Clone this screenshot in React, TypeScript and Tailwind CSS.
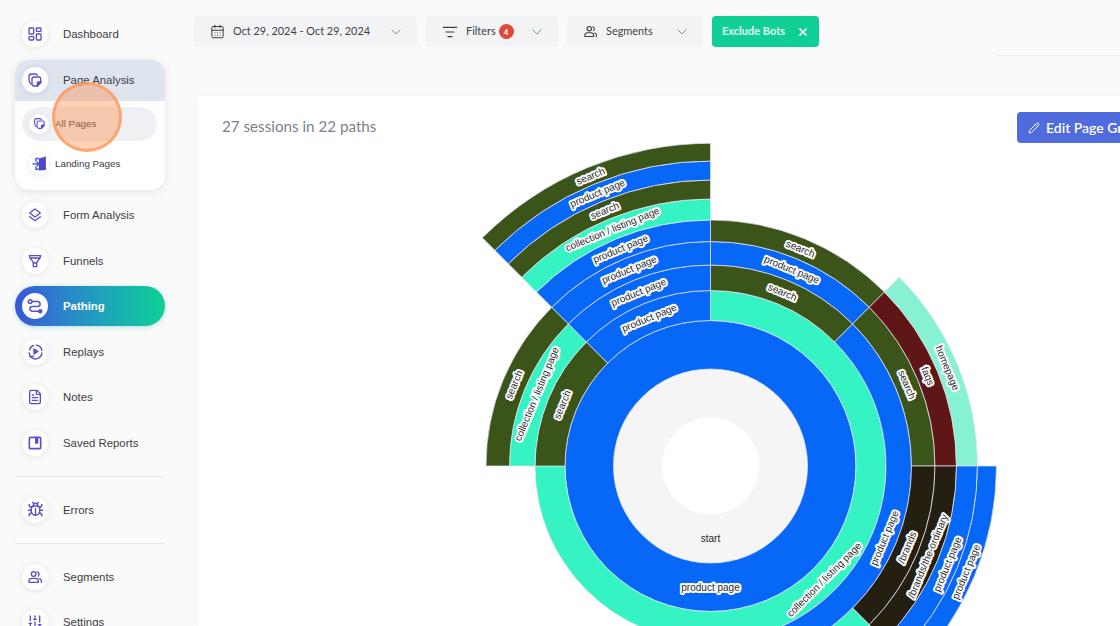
import { Bug, CalendarDays, ChevronDown, FileText, LayoutDashboard, ListFilter, Pencil, SlidersVertical, X } from "lucide-react";
import type { ReactNode } from "react";

const BLUE = "#0767f6";
const MINT = "#35f3c2";
const GREEN = "#3a5419";
const RED = "#5e1616";
const BLACK = "#251f12";
const PALE = "#86f1d3";

const R = [48.5, 97, 145.5, 175.5, 201, 224.5, 246, 267, 286, 305, 322.7];

type Seg = { ring: number; from: number; to: number; color: string; label?: string };

const segments: Seg[] = [
  { ring: 0, from: 0, to: 360, color: "#f5f5f6", label: "start" },
  { ring: 1, from: 0, to: 360, color: BLUE, label: "product page" },
  { ring: 2, from: 0, to: 270, color: MINT, label: "collection / listing page" },
  { ring: 2, from: 270, to: 315, color: GREEN, label: "search" },
  { ring: 2, from: 315, to: 360, color: BLUE, label: "product page" },
  { ring: 3, from: 0, to: 45, color: GREEN, label: "search" },
  { ring: 3, from: 45, to: 180, color: BLUE, label: "product page" },
  { ring: 3, from: 270, to: 315, color: MINT, label: "collection / listing page" },
  { ring: 3, from: 315, to: 360, color: BLUE, label: "product page" },
  { ring: 4, from: 0, to: 45, color: BLUE, label: "product page" },
  { ring: 4, from: 45, to: 90, color: GREEN, label: "search" },
  { ring: 4, from: 90, to: 135, color: BLACK, label: "/brands" },
  { ring: 4, from: 135, to: 180, color: MINT },
  { ring: 4, from: 270, to: 315, color: GREEN, label: "search" },
  { ring: 4, from: 315, to: 360, color: BLUE, label: "product page" },
  { ring: 5, from: 0, to: 45, color: GREEN, label: "search" },
  { ring: 5, from: 45, to: 90, color: RED, label: "faqs" },
  { ring: 5, from: 90, to: 135, color: BLACK, label: "/brands/the-ordinary" },
  { ring: 5, from: 315, to: 360, color: BLUE, label: "product page" },
  { ring: 6, from: 45, to: 90, color: PALE, label: "homepage" },
  { ring: 6, from: 90, to: 135, color: BLUE, label: "product page" },
  { ring: 6, from: 315, to: 360, color: MINT, label: "collection / listing page" },
  { ring: 7, from: 90, to: 135, color: BLUE, label: "product page" },
  { ring: 7, from: 315, to: 360, color: GREEN, label: "search" },
  { ring: 8, from: 315, to: 360, color: BLUE, label: "product page" },
  { ring: 9, from: 315, to: 360, color: GREEN, label: "search" },
];

function polar(r: number, deg: number) {
  const a = (deg * Math.PI) / 180;
  return [r * Math.sin(a), -r * Math.cos(a)];
}

function arcPath(r0: number, r1: number, from: number, to: number) {
  if (to - from >= 360) {
    return `M0 ${-r1}A${r1} ${r1} 0 1 1 0 ${r1}A${r1} ${r1} 0 1 1 0 ${-r1}ZM0 ${-r0}A${r0} ${r0} 0 1 0 0 ${r0}A${r0} ${r0} 0 1 0 0 ${-r0}Z`;
  }
  const large = to - from > 180 ? 1 : 0;
  const [x0, y0] = polar(r1, from);
  const [x1, y1] = polar(r1, to);
  const [x2, y2] = polar(r0, to);
  const [x3, y3] = polar(r0, from);
  return `M${x0} ${y0}A${r1} ${r1} 0 ${large} 1 ${x1} ${y1}L${x2} ${y2}A${r0} ${r0} 0 ${large} 0 ${x3} ${y3}Z`;
}

function Sunburst() {
  return (
    <svg width="660" height="660" viewBox="-330.5 -330 660 660" className="block shrink-0 ml-[158px] mt-[-8px]">
      {segments.map((s, i) => (
        <path
          key={i}
          d={arcPath(R[s.ring], R[s.ring + 1], s.from, s.to)}
          fill={s.color}
          stroke={s.ring === 0 ? "none" : "#e6e4f5"}
          strokeWidth="0.7"
        />
      ))}
      {segments.map((s, i) => {
        if (!s.label) return null;
        const mid = (s.from + s.to) / 2;
        const r = (R[s.ring] + R[s.ring + 1]) / 2;
        const [x, y] = polar(r, mid);
        const rot = mid > 90 && mid <= 270 ? mid - 180 : mid > 270 ? mid - 360 : mid;
        return (
          <text
            key={i}
            transform={`translate(${x} ${y}) rotate(${rot})`}
            textAnchor="middle"
            dominantBaseline="central"
            fontSize="10"
            fill="#2a2a2a"
            stroke={s.ring === 0 ? "none" : "#fff"}
            strokeWidth="4"
            strokeLinejoin="round"
            paintOrder="stroke"
            className="font-['Liberation_Sans',sans-serif]"
          >
            {s.label}
          </text>
        );
      })}
    </svg>
  );
}

const ic = { fill: "none", stroke: "currentColor", strokeWidth: 2, strokeLinecap: "round", strokeLinejoin: "round" } as const;

const PagesIcon = ({ size = 16 }: { size?: number }) => (
  <svg width={size} height={size} viewBox="0 0 24 24" {...ic}>
    <path d="M6 18C3.800 16 3 14 3 11V7c0-2.500 1.500-4 4-4h5c1.500 0 2.700.5 3.500 1.500" />
    <path d="M10.500 7.500H18a2.500 2.500 0 0 1 2.500 2.500v6l-5 5H11a3.500 3.500 0 0 1-3.500-3.500v-7a3 3 0 0 1 3-3z" />
    <path d="M21 15h-4a1.500 1.500 0 0 0-1.500 1.500V21z" fill="currentColor" />
  </svg>
);

const LayersIcon = () => (
  <svg width="16" height="16" viewBox="0 0 24 24" {...ic}>
    <path d="M12 3l8 6-8 6-8-6z" />
    <path d="M4 14.500l8 6 8-6" />
  </svg>
);

const FunnelIcon = () => (
  <svg width="16" height="16" viewBox="0 0 24 24" {...ic}>
    <path d="M3.500 4h17l-1 3.500H4.500z" />
    <path d="M5 8l4.500 6v6.500h5V14L19 8" />
    <path d="M9.500 15h5" />
  </svg>
);

const PathIcon = () => (
  <svg width="18" height="18" viewBox="0 0 24 24" {...ic}>
    <circle cx="5.500" cy="6" r="2.500" />
    <path d="M8 6h7.500a3 3 0 0 1 0 6.500h-7a3 3 0 0 0 0 6.500H16" />
    <circle cx="19" cy="19" r="2" fill="currentColor" />
  </svg>
);

const ReplayIcon = () => (
  <svg width="17" height="17" viewBox="0 0 24 24" {...ic}>
    <path d="M3.500 9.500A9 9 0 0 1 9 3.500" />
    <path d="M13 3a9 9 0 0 1 8 7.500" />
    <path d="M21 14a9 9 0 0 1-16 5" />
    <path d="M3 14l1.500 5.500 5-1" />
    <path d="M10 8.500l5.500 3.500-5.500 3.500z" fill="currentColor" />
  </svg>
);

const SavedIcon = () => (
  <svg width="16" height="16" viewBox="0 0 24 24" {...ic}>
    <rect x="3.500" y="3.500" width="17" height="17" rx="1.500" strokeWidth="2.400" />
    <path d="M12 4h5v9h-5z" fill="currentColor" stroke="none" />
  </svg>
);

const GroupIcon = ({ size = 16, width = 2 }: { size?: number; width?: number }) => (
  <svg width={size} height={size} viewBox="0 0 24 24" {...ic} strokeWidth={width}>
    <circle cx="10" cy="7.500" r="3.500" />
    <path d="M15.500 4.500a3.500 3.500 0 0 1 1.500 6" />
    <path d="M3 20v-2a4 4 0 0 1 4-4h6a4 4 0 0 1 4 4v2z" />
    <path d="M19 14.500a4 4 0 0 1 2.500 3.500v2" />
  </svg>
);

const LandingIcon = () => (
  <svg width="17" height="17" viewBox="0 0 24 24" fill="none">
    <path d="M11 5l10-3v19l-10 1z" fill="#4f46c8" />
    <path d="M11 5H7v4M7 16v4h4" stroke="#3b5bdb" strokeWidth="2" />
    <path d="M2 12.500h9M8 9.500l3 3-3 3" stroke="#3b5bdb" strokeWidth="2" />
  </svg>
);

function Circle({ children, small }: { children: ReactNode; small?: boolean }) {
  return (
    <span
      className={`flex items-center justify-center rounded-full bg-white text-[#5a4fc6] shadow-[0_1px_6px_rgba(40,40,80,0.1)] shrink-0 ${
        small ? "w-[20px] h-[20px]" : "w-[26px] h-[26px]"
      }`}
    >
      {children}
    </span>
  );
}

function NavRow({ icon, label }: { icon: ReactNode; label: string }) {
  return (
    <div className="flex items-center h-[40px] pl-[7px] gap-[15px] text-[11.4px] text-[#3a3d44] shrink-0">
      <Circle>{icon}</Circle>
      <span className="pt-[2px]">{label}</span>
    </div>
  );
}

function Divider() {
  return <div className="h-px bg-[#e5e8ea] my-[7.5px] shrink-0" />;
}

function Dropdown({ icon, label, badge, width }: { icon: ReactNode; label: string; badge?: boolean; width: string }) {
  return (
    <div className={`flex items-center h-[31px] rounded-[4px] bg-[#f2f3f5] pl-[16px] pr-[13px] text-[10.9px] text-[#3c3f46] ${width}`}>
      {icon}
      <span className="ml-[8px]">{label}</span>
      {badge && (
        <span className="ml-[3px] flex items-center justify-center w-[15px] h-[15px] rounded-full bg-[#e2483a] text-white text-[8px] font-bold">
          4
        </span>
      )}
      <ChevronDown size={16} strokeWidth={1.5} className="ml-auto text-[#8b9099]" />
    </div>
  );
}

export default function App() {
  return (
    <div className="flex w-[1120px] h-[626px] overflow-hidden bg-[#fafafa] font-['Liberation_Sans',sans-serif]">
      <aside className="relative w-[198px] shrink-0 pl-[15px] pr-[33px] pt-[14px] flex flex-col gap-[5.5px] overflow-hidden">
        <NavRow icon={<LayoutDashboard size={16} />} label="Dashboard" />

        <div className="rounded-[14px] bg-white shadow-[0_2px_8px_rgba(40,40,80,0.1)] overflow-hidden h-[130px] shrink-0">
          <div className="flex items-center h-[41px] bg-[#dfe5ef] pl-[7px] gap-[15px] text-[11.4px] text-[#3a3d44]">
            <Circle>
              <PagesIcon />
            </Circle>
            <span className="pt-[2px]">Page Analysis</span>
          </div>
          <div className="flex flex-col pl-[7px] pr-[8px] pt-[6px] gap-[6px]">
            <div className="flex items-center h-[34px] rounded-full bg-[#f0f1f4] pl-[7px] gap-[6px] text-[9.8px] text-[#3a3d44]">
              <Circle small>
                <PagesIcon size={13} />
              </Circle>
              <span className="pt-[2px]">All Pages</span>
            </div>
            <div className="flex items-center h-[34px] pl-[7px] gap-[6px] text-[9.8px] text-[#3a3d44]">
              <Circle small>
                <LandingIcon />
              </Circle>
              <span className="pt-[2px]">Landing Pages</span>
            </div>
          </div>
        </div>

        <NavRow icon={<LayersIcon />} label="Form Analysis" />
        <NavRow icon={<FunnelIcon />} label="Funnels" />

        <div className="flex items-center h-[40px] pl-[7px] gap-[15px] rounded-full bg-gradient-to-r from-[#3a55dd] to-[#10d094] text-[11.4px] font-bold text-white shadow-[0_1px_5px_rgba(20,160,150,0.3)] shrink-0">
          <Circle>
            <PathIcon />
          </Circle>
          <span className="pt-[2px]">Pathing</span>
        </div>

        <NavRow icon={<ReplayIcon />} label="Replays" />
        <NavRow icon={<FileText size={16} />} label="Notes" />
        <NavRow icon={<SavedIcon />} label="Saved Reports" />
        <Divider />
        <NavRow icon={<Bug size={17} />} label="Errors" />
        <Divider />
        <NavRow icon={<GroupIcon />} label="Segments" />
        <NavRow icon={<SlidersVertical size={16} />} label="Settings" />

        <div className="absolute left-[52px] top-[82px] w-[70px] h-[70px] rounded-full bg-[#ff8c46]/40 border-[3px] border-[#ff9a5c]/80" />
      </aside>

      <main className="flex-1 min-w-0 flex flex-col font-['Lato',sans-serif]">
        <div className="relative h-[96px] shrink-0 flex items-start pt-[16px] gap-[9px] ml-[-4px]">
          <Dropdown icon={<CalendarDays size={15} strokeWidth={1.6} />} label="Oct 29, 2024 - Oct 29, 2024" width="w-[223px]" />
          <Dropdown icon={<ListFilter size={16} strokeWidth={1.8} />} label="Filters" badge width="w-[132px]" />
          <Dropdown icon={<GroupIcon size={15} width={1.8} />} label="Segments" width="w-[136px]" />
          <div className="flex items-center justify-between h-[31px] w-[107px] rounded-[4px] bg-[#10cf96] pl-[10px] pr-[10px] text-[11px] font-bold text-white/85">
            <span>Exclude Bots</span>
            <X size={12} strokeWidth={3.5} className="text-white" />
          </div>
          <div className="absolute left-[801px] top-[55px] w-[125px] h-px bg-[#efefef]" />
        </div>

        <section className="flex-1 min-h-0 bg-white overflow-hidden pt-[16px] pl-[24px] shadow-[0_0_6px_rgba(0,0,0,0.03)]">
          <div className="flex items-start h-[32px]">
            <span className="w-[795px] shrink-0 text-[15.2px] text-[#7d828a] pt-[3px]">27 sessions in 22 paths</span>
            <button className="flex items-center gap-[6px] h-[31px] w-[160px] shrink-0 rounded-[4px] bg-[#4f6bdc] pl-[11px] text-[14px] font-semibold text-white whitespace-nowrap">
              <Pencil size={12} />
              Edit Page Groups
            </button>
          </div>
          <Sunburst />
        </section>
      </main>
    </div>
  );
}
